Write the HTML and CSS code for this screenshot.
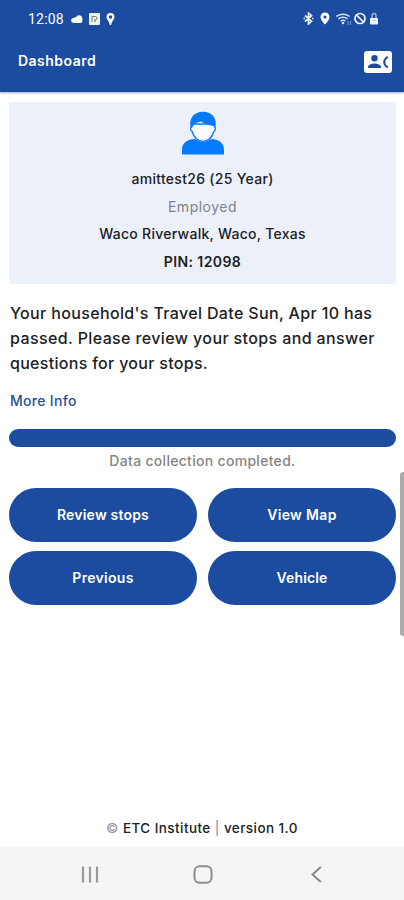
FILE: index.html
```
<!DOCTYPE html>
<html lang="en">
<head>
<meta charset="utf-8">
<title>Dashboard</title>
<link rel="stylesheet" href="styles.css">
</head>
<body>
<header class="top">
  <div class="status">
    <div class="status-left">
      <span class="clock">12:08</span>
      <svg width="12" height="10" viewBox="0 0 12 10"><path fill="#fff" d="M2.700 9A2.500 2.500 0 0 1 2.600 4a2 2 0 0 1 2.300-.6A3.400 3.400 0 0 1 11.400 4v3A2 2 0 0 1 9.500 9z"/></svg>
      <svg width="11" height="12" viewBox="0 0 11 12"><rect width="11" height="12" rx="1" fill="#f1f1ec"/><path d="M3 9V3.500h3.200a1.700 1.700 0 0 1 0 3.500H5M6.200 7v2" fill="none" stroke="#7d7a78"/></svg>
      <svg class="pin" width="9" height="12" viewBox="0 0 9 12"><path fill="#fff" fill-rule="evenodd" d="M4.500 0a4 4 0 0 1 4 4C8.500 6.500 5.800 8 5.200 12H3.800C3.200 8 .5 6.500.5 4a4 4 0 0 1 4-4zm0 2.300a1.700 1.700 0 1 0 0 3.400 1.700 1.700 0 0 0 0-3.400z"/></svg>
    </div>
    <div class="status-right">
      <svg width="11" height="13" viewBox="0 0 11 13"><path d="M2 3.500l6.500 5.800L5.500 12V1l3 2.700L2 9.500M.5 6.500h1.500M9 6.500h1.500" fill="none" stroke="#e5edff" stroke-width="1.700"/></svg>
      <svg width="10" height="13" viewBox="0 0 10 13"><path fill="#fff" fill-rule="evenodd" d="M5 .5a4.500 4.500 0 0 1 4.500 4.500C9.500 8 5 12.500 5 12.500S.5 8 .5 5A4.500 4.500 0 0 1 5 .5zm0 2.900a1.600 1.600 0 1 0 0 3.200 1.600 1.600 0 0 0 0-3.200z"/></svg>
      <svg width="16" height="14" viewBox="0 0 16 14"><path d="M.3 4.500Q7 0 13.700 4.500M2.300 6.800Q7 3.600 11.700 6.800M4.500 9Q7 7.300 9.500 9" fill="none" stroke="#d5e0fa" stroke-width="1.500"/><circle cx="7" cy="11" r="1.300" fill="#d5e0fa"/><path d="M12 9v4M14.500 9v4" stroke="#7d9bd2"/></svg>
      <svg width="12" height="13" viewBox="0 0 12 13"><circle cx="6" cy="6.500" r="5" fill="none" stroke="#f1f5ff" stroke-width="1.700"/><path d="M2.500 3l7 7" stroke="#f1f5ff" stroke-width="1.700"/></svg>
      <svg width="10" height="13" viewBox="0 0 10 13"><path d="M3 6V3.500a2 2 0 0 1 4 0V6" fill="none" stroke="#a9bfe8" stroke-width="1.300"/><rect x="1" y="6" width="8" height="6.500" rx="1" fill="#f5f7ff"/><path d="M3.500 8.500h3" stroke="#adbcd9"/></svg>
    </div>
  </div>
  <div class="appbar">
    <h1>Dashboard</h1>
    <svg width="28" height="22" viewBox="0 0 28 22"><rect width="28" height="22" rx="3" fill="#fff"/><circle cx="10.500" cy="7.300" r="3.200" fill="#1b4c9f"/><path fill="#1b4c9f" d="M4 17v-1.200c0-2 4-3.300 6.500-3.300s6.500 1.300 6.500 3.300V17z"/><path d="M24 6.200l-1.600.4c-2.700 2.800-2.700 6.200 0 9l1.600.4" fill="none" stroke="#1b4c9f" stroke-width="2"/></svg>
  </div>
</header>
<main>
  <section class="profile">
    <svg width="44" height="44" viewBox="0 0 44 44"><path fill="#067aff" d="M1 43.500V39C1 32 6 28 14 28q8 6 16 0c8 0 13 4 13 11v4.500z"/><path fill="#fbfcff" stroke="#067aff" stroke-width="1.300" d="M10.500 13h23v3c1.400 1 1 4-.7 4.500C31.500 26 27 30.300 22 30.300S12.500 26 11.200 20.500C9.500 20 9 17 10.500 16z"/><path fill="#067aff" d="M9.700 17C7.500 7 13 .8 22 .8S36.500 7 34.300 17l-1.300-2c-4-.5-9-1.500-13-4.500-1.500 1.200-4 .3-6 2-1.500 1.300-2 3-3 4.500z"/></svg>
    <p class="name">amittest26 (25 Year)</p>
    <p class="job">Employed</p>
    <p class="place">Waco Riverwalk, Waco, Texas</p>
    <p class="code">PIN: 12098</p>
  </section>
  <p class="message"><span class="m1">Your household's Travel Date Sun, Apr 10 has</span><br><span class="m2">passed. Please review your stops and answer</span><br><span class="m3">questions for your stops.</span></p>
  <a class="more">More Info</a>
  <div class="progress"></div>
  <p class="done">Data collection completed.</p>
  <div class="actions">
    <button><span class="b1">Review stops</span></button>
    <button><span class="b2">View Map</span></button>
    <button><span class="b3">Previous</span></button>
    <button><span class="b4">Vehicle</span></button>
  </div>
</main>
<footer><span class="copy">©</span> ETC Institute <span class="bar">|</span> version 1.0</footer>
<nav>
  <svg width="20" height="20" viewBox="0 0 20 20"><path d="M3 1.500v16M10 1.500v16M17 1.500v16" stroke="#999" stroke-width="2.200"/></svg>
  <svg width="20" height="20" viewBox="0 0 20 20"><rect x="1.500" y="1.200" width="17" height="16.500" rx="5" fill="none" stroke="#8c8c8c" stroke-width="2"/></svg>
  <svg width="20" height="20" viewBox="0 0 20 20"><path d="M14.800 2L6.500 9.500l8.300 7.500" fill="none" stroke="#858585" stroke-width="1.900"/></svg>
</nav>
<div class="scrollbar"></div>
</body>
</html>
```
FILE: styles.css
```
* { box-sizing: border-box; }
body {
  margin: 0;
  width: 404px;
  height: 900px;
  overflow: hidden;
  position: relative;
  display: flex;
  flex-direction: column;
  background: #fff;
  color: #202124;
  font: 500 14px/28px Inter, "Liberation Sans", sans-serif;
}
svg { display: block; flex: none; }
p, h1 { margin: 0; white-space: nowrap; }
.top { height: 92px; background: #1b4c9f; color: #fff; box-shadow: 0 1px 2px #9baed0; }
.status { height: 37px; display: flex; justify-content: space-between; padding: 0 25px 0 28px; }
.status-left, .status-right { display: flex; align-items: center; gap: 6px; }
.status-right svg:nth-child(4) { margin-left: -4px; }
.status-right svg:nth-child(5) { margin-left: -3px; }
.clock { width: 37px; font: 400 14px/20px Roboto, sans-serif; letter-spacing: .2px; }
.appbar { height: 50px; display: flex; align-items: center; justify-content: space-between; padding: 0 12px 0 18px; }
h1 { font-size: 14px; line-height: 20px; font-weight: 600; letter-spacing: .48px; margin-top: -2px; }
main { flex: 1; padding: 10px 8px 0 9px; }
.profile { height: 182px; background: #ecf0f9; display: flex; flex-direction: column; align-items: center; padding-top: 9px; border-radius: 2px; }
.profile p { height: 27.700px; }
.profile svg { margin-bottom: 10px; }
.name { letter-spacing: .3px; }
.job { color: #808389; font-weight: 400; letter-spacing: .5px; }
.place { letter-spacing: .27px; }
.code { font-weight: 600; letter-spacing: .4px; }
.message { margin: 17px 0 0 1px; font-size: 16px; line-height: 25px; }
.m1 { letter-spacing: .35px; }
.m2 { letter-spacing: .38px; }
.m3 { letter-spacing: .3px; }
.more { display: block; width: 80px; margin: 12px 0 0 1px; line-height: 26px; letter-spacing: .3px; color: #294f9a; white-space: nowrap; }
.progress { height: 18px; margin-top: 15px; border-radius: 9px; background: #1b4c9f; }
.done { text-align: center; color: #858585; line-height: 26px; margin-top: 1px; letter-spacing: .3px; }
.actions { display: grid; grid-template-columns: 1fr 1fr; grid-auto-rows: 54px; gap: 9px 11px; margin-top: 14px; }
button { border: 0; border-radius: 27px; background: #1b4c9f; color: #fff; font: 600 14px/20px Inter, sans-serif; padding: 0; white-space: nowrap; }
.b1 { letter-spacing: .2px; }
.b2 { letter-spacing: .35px; }
.b3 { letter-spacing: .3px; }
.b4 { letter-spacing: .15px; }
footer { height: 33px; text-align: center; font-size: 13.500px; line-height: 28px; letter-spacing: .43px; white-space: nowrap; }
.copy, .bar { color: #999; }
nav { height: 53px; background: #f5f5f5; display: flex; justify-content: space-between; align-items: center; padding: 2px 78px 0 80px; }
.scrollbar { position: absolute; right: 0; top: 472px; width: 4px; height: 164px; border-radius: 3px 0 0 3px; background: #ababab; }
```
